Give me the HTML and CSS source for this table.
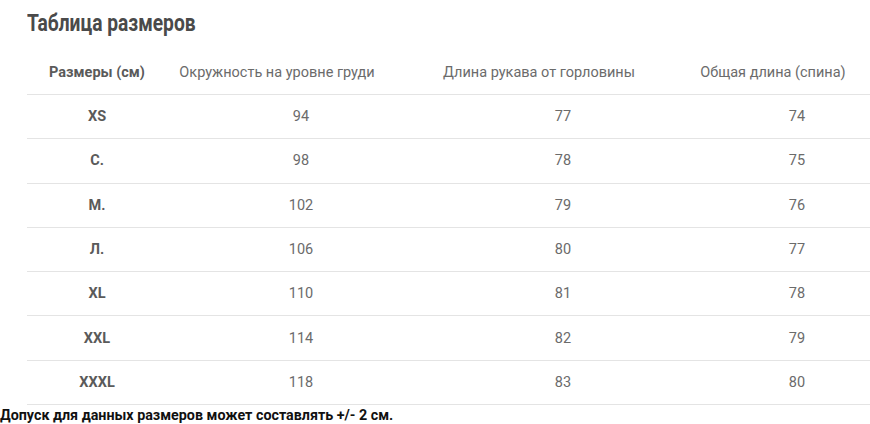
FILE: index.html
```html
<!DOCTYPE html>
<html lang="ru">
<head>
<meta charset="utf-8">
<link rel="stylesheet" href="styles.css">
</head>
<body>
<div class="wrap">
  <h2 class="title"><span class="title-text">Таблица размеров</span></h2>
  <table class="sizes">
    <colgroup>
      <col class="c1"><col class="c2"><col class="c3"><col class="c4">
    </colgroup>
    <thead>
      <tr><th class="first">Размеры (см)</th><th>Окружность на уровне груди</th><th>Длина рукава от горловины</th><th>Общая длина (спина)</th></tr>
    </thead>
    <tbody>
      <tr><td class="first">XS</td><td>94</td><td>77</td><td>74</td></tr>
      <tr><td class="first">С.</td><td>98</td><td>78</td><td>75</td></tr>
      <tr><td class="first">М.</td><td>102</td><td>79</td><td>76</td></tr>
      <tr><td class="first">Л.</td><td>106</td><td>80</td><td>77</td></tr>
      <tr><td class="first">XL</td><td>110</td><td>81</td><td>78</td></tr>
      <tr><td class="first">XXL</td><td>114</td><td>82</td><td>79</td></tr>
      <tr><td class="first">XXXL</td><td>118</td><td>83</td><td>80</td></tr>
    </tbody>
  </table>
</div>
<p class="note">Допуск для данных размеров может составлять +/- 2 см.</p>
</body>
</html>
```

FILE: styles.css
```css
html, body {
  margin: 0;
  padding: 0;
  background: #fff;
  font-family: Roboto, "Noto Sans", sans-serif;
  overflow-x: hidden;
}
.wrap {
  padding-left: 27px;
  overflow: hidden;
}
.title {
  margin: 0;
  padding-top: 9px;
  height: 42px;
  font-size: 24px;
  line-height: 28px;
  font-weight: 700;
  color: #4a4a4a;
}
.title-text {
  display: inline-block;
  transform: scaleX(0.8);
  transform-origin: left center;
  white-space: nowrap;
}
.sizes {
  border-collapse: collapse;
  width: 876px;
  table-layout: fixed;
  font-size: 14.5px;
  color: #6b6b6b;
}
.c1 { width: 140px; }
.c2 { width: 268px; }
.c3 { width: 256px; }
.c4 { width: 212px; }
.sizes th, .sizes td {
  height: 43px;
  padding: 0;
  text-align: center;
  vertical-align: middle;
  border-bottom: 1px solid #e4e4e4;
  font-weight: 400;
}
.sizes td {
  height: 43.3px;
}
.sizes th {
  padding-right: 48px;
  white-space: nowrap;
}
.sizes th.first {
  padding-right: 0;
}
.sizes .first {
  font-weight: 700;
  color: #5a5a5a;
}
.note {
  margin: 0;
  padding-top: 2px;
  font-size: 14.3px;
  font-weight: 700;
  color: #111;
}
```
